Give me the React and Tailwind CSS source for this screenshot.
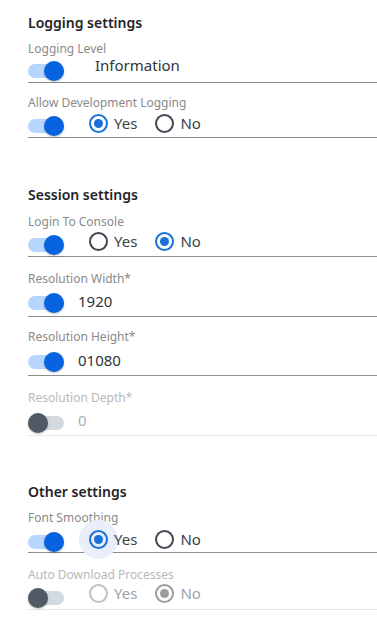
import React from 'react';

// Toggle switch (on = blue, off = gray)
function Toggle({ on }) {
  return (
    <div className="relative w-9 h-5 shrink-0">
      <div className={`absolute left-0 top-[3px] w-9 h-[14px] rounded-full ${on ? 'bg-[#b6d6fd]' : 'bg-[#d3dadf]'}`}></div>
      <div className={`absolute top-0 w-5 h-5 rounded-full shadow-[0_1px_2px_rgba(0,0,0,0.25)] ${on ? 'right-0 bg-[#0764e0]' : 'left-0 bg-[#4f5a65]'}`}></div>
    </div>
  );
}

function Radio({ label, checked, disabled, halo }) {
  const ring = disabled
    ? checked ? 'border-[#9d9d9d]' : 'border-[#bcc2c7]'
    : checked ? 'border-[#1a71d8]' : 'border-[#3f4851]';
  const dot = disabled ? 'bg-[#9d9d9d]' : 'bg-[#1a71d8]';
  return (
    <div className="flex items-center gap-[6px]">
      <div className="relative w-[19px] h-[19px] shrink-0">
        {halo && <div className="absolute -left-[10px] -top-[10px] w-[39px] h-[39px] rounded-full bg-[#e8effa]"></div>}
        <div className={`absolute inset-0 rounded-full border-2 flex items-center justify-center ${ring}`}>
          {checked && <div className={`w-[9px] h-[9px] rounded-full ${dot}`}></div>}
        </div>
      </div>
      <span className={`relative text-[15px] leading-5 ${disabled ? 'text-[#9aa3ab]' : 'text-[#3a4148]'}`}>{label}</span>
    </div>
  );
}

function Field({ label, disabled, className, rowClass, children }) {
  return (
    <div className={`border-b ${disabled ? 'border-[#e8e9ea]' : 'border-[#8c8c8c]'} ${className}`}>
      <div className={`text-[12px] leading-4 ${disabled ? 'text-[#b8b8b8]' : 'text-[#8a8a8a]'}`}>{label}</div>
      <div className={`flex items-start ${rowClass}`}>{children}</div>
    </div>
  );
}

function Heading({ children, className }) {
  return <h2 className={`text-[14px] leading-5 font-semibold text-[#1f2429] ${className}`}>{children}</h2>;
}

export default function App() {
  return (
    <div className="w-[377px] min-h-[626px] bg-white pl-[28px] pt-[13px] font-['Noto_Sans',sans-serif]">
      <Heading>Logging settings</Heading>
      <Field label="Logging Level" className="mt-2" rowClass="h-[25px]">
        <div className="mt-[4px]"><Toggle on /></div>
        <span className="ml-[31px] -mt-[2px] text-[15px] leading-5 text-[#2f353b]">Information</span>
      </Field>
      <Field label="Allow Development Logging" className="mt-3" rowClass="h-[26px]">
        <div className="mt-[5px]"><Toggle on /></div>
        <div className="ml-[25px] mt-[2px] flex gap-[18px]">
          <Radio label="Yes" checked />
          <Radio label="No" />
        </div>
      </Field>

      <Heading className="mt-[47px]">Session settings</Heading>
      <Field label="Login To Console" className="mt-[9px]" rowClass="h-[26px]">
        <div className="mt-[5px]"><Toggle on /></div>
        <div className="ml-[25px] mt-px flex gap-[18px]">
          <Radio label="Yes" />
          <Radio label="No" checked />
        </div>
      </Field>
      <Field label="Resolution Width*" className="mt-[14px]" rowClass="h-[29px]">
        <div className="mt-[6px]"><Toggle on /></div>
        <span className="ml-[14px] mt-[4px] text-[15px] leading-5 text-[#2f353b]">1920</span>
      </Field>
      <Field label="Resolution Height*" className="mt-3" rowClass="h-[30px]">
        <div className="mt-[7px]"><Toggle on /></div>
        <span className="ml-[14px] mt-[5px] text-[15px] leading-5 text-[#2f353b]">01080</span>
      </Field>
      <Field label="Resolution Depth*" disabled className="mt-[14px]" rowClass="h-[29px]">
        <div className="mt-[7px]"><Toggle /></div>
        <span className="ml-[14px] mt-[4px] text-[15px] leading-5 text-[#a9b0b6]">0</span>
      </Field>

      <Heading className="mt-[46px]">Other settings</Heading>
      <Field label="Font Smoothing" className="mt-2" rowClass="h-[26px]">
        <div className="mt-[6px]"><Toggle on /></div>
        <div className="ml-[25px] mt-[3px] flex gap-[18px]">
          <Radio label="Yes" checked halo />
          <Radio label="No" />
        </div>
      </Field>
      <Field label="Auto Download Processes" disabled className="mt-[14px]" rowClass="h-[26px]">
        <div className="mt-[5px]"><Toggle /></div>
        <div className="ml-[25px] flex gap-[18px]">
          <Radio label="Yes" disabled />
          <Radio label="No" checked disabled />
        </div>
      </Field>
    </div>
  );
}
